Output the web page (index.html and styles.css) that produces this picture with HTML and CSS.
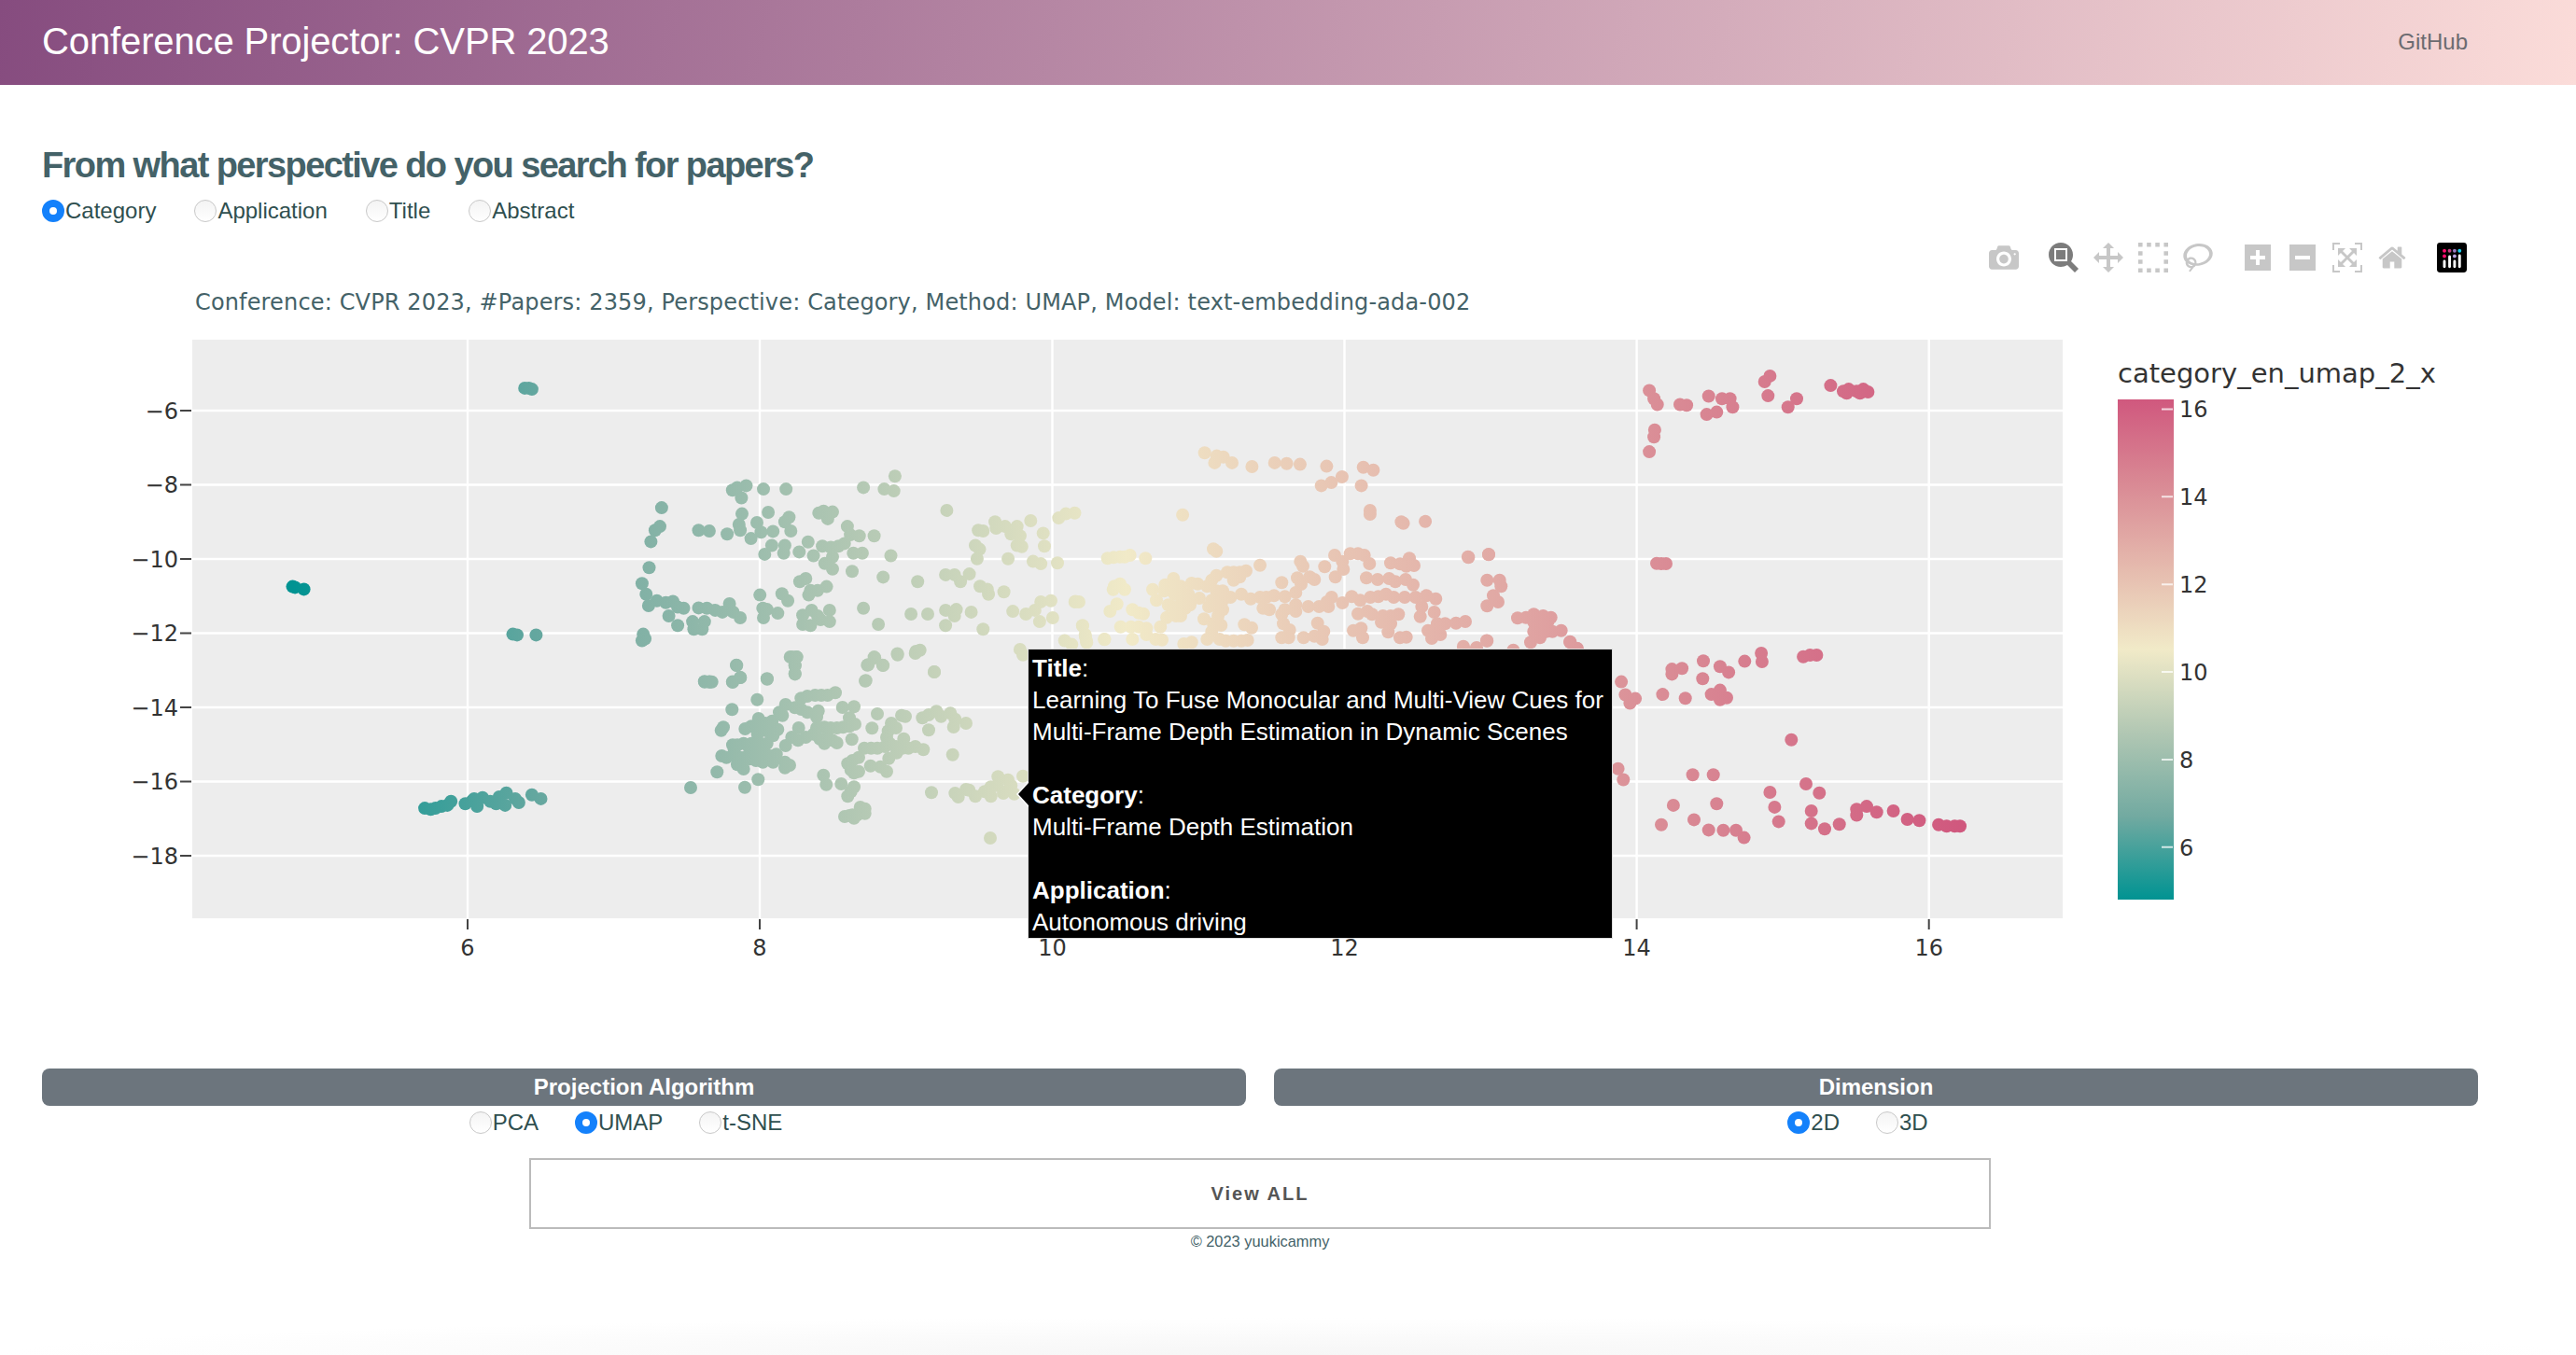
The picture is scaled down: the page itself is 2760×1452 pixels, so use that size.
FILE: index.html
```html
<!DOCTYPE html>
<html lang="en">
<head>
<meta charset="utf-8">
<title>Conference Projector: CVPR 2023</title>
<link rel="stylesheet" href="styles.css">
</head>
<body>
<header class="navbar">
  <span class="brand">Conference Projector: CVPR 2023</span>
  <a class="nav-link">GitHub</a>
</header>
<main class="container">
  <h2 class="question">From what perspective do you search for papers?</h2>
  <div class="radios">
    <label class="radio"><input type="radio" name="perspective" checked>Category</label>
    <label class="radio"><input type="radio" name="perspective">Application</label>
    <label class="radio"><input type="radio" name="perspective">Title</label>
    <label class="radio"><input type="radio" name="perspective">Abstract</label>
  </div>

  <section class="plot">
    <svg class="chart" viewBox="45 250 2610 840" width="2610" height="840">
      <defs>
        <linearGradient id="tealrose" gradientUnits="userSpaceOnUse" x1="313.6" y1="0" x2="2100" y2="0">
          <stop offset="0" stop-color="#009392"/><stop offset="0.1667" stop-color="#72aaa1"/><stop offset="0.3333" stop-color="#b1c7b3"/><stop offset="0.5" stop-color="#f1eac8"/><stop offset="0.6667" stop-color="#e5b9ad"/><stop offset="0.8333" stop-color="#d98994"/><stop offset="1" stop-color="#d0587e"/>
        </linearGradient>
        <linearGradient id="tealrose-bar" x1="0" y1="1" x2="0" y2="0">
          <stop offset="0" stop-color="#009392"/><stop offset="0.1667" stop-color="#72aaa1"/><stop offset="0.3333" stop-color="#b1c7b3"/><stop offset="0.5" stop-color="#f1eac8"/><stop offset="0.6667" stop-color="#e5b9ad"/><stop offset="0.8333" stop-color="#d98994"/><stop offset="1" stop-color="#d0587e"/>
        </linearGradient>
      </defs>
      <text class="chart-title" x="209" y="332">Conference: CVPR 2023, #Papers: 2359, Perspective: Category, Method: UMAP, Model: text-embedding-ada-002</text>
      <rect class="plot-bg" x="206" y="364" width="2004" height="620"/>
      <g class="grid">
        <path d="M501 364V984M814 364V984M1127.5 364V984M1440.5 364V984M1753.6 364V984M2066.7 364V984"/>
        <path d="M206 440H2210M206 519.5H2210M206 599H2210M206 678.5H2210M206 758H2210M206 837.5H2210M206 917H2210"/>
      </g>
      <g id="points" fill="url(#tealrose)"></g>
      <g class="ticks">
        <path d="M193 440H205M193 519.5H205M193 599H205M193 678.5H205M193 758H205M193 837.5H205M193 917H205"/>
        <path d="M501 985V996M814 985V996M1127.5 985V996M1440.5 985V996M1753.6 985V996M2066.7 985V996"/>
      </g>
      <g class="tick-labels y">
        <text x="191" y="449">−6</text><text x="191" y="528">−8</text><text x="191" y="608">−10</text><text x="191" y="687">−12</text><text x="191" y="767">−14</text><text x="191" y="846">−16</text><text x="191" y="926">−18</text>
      </g>
      <g class="tick-labels x">
        <text x="501" y="1024">6</text><text x="814" y="1024">8</text><text x="1127.5" y="1024">10</text><text x="1440.5" y="1024">12</text><text x="1753.6" y="1024">14</text><text x="2066.7" y="1024">16</text>
      </g>
      <text class="legend-title" x="2269" y="410">category_en_umap_2_x</text>
      <rect x="2269" y="428" width="60" height="536" fill="url(#tealrose-bar)"/>
      <path class="bar-ticks" d="M2316 438.4H2328M2316 532.3H2328M2316 626.2H2328M2316 720H2328M2316 814H2328M2316 907.8H2328"/>
      <g class="tick-labels bar">
        <text x="2335" y="447">16</text><text x="2335" y="541">14</text><text x="2335" y="635">12</text><text x="2335" y="729">10</text><text x="2335" y="823">8</text><text x="2335" y="917">6</text>
      </g>
    </svg>

    <div class="modebar">
      <div class="modebar-group">
        <span class="mode-btn"><svg viewBox="0 0 1000 1000"><path transform="matrix(1 0 0 -1 0 850)" d="m500 450c-83 0-150-67-150-150 0-83 67-150 150-150 83 0 150 67 150 150 0 83-67 150-150 150z m400 150h-120c-16 0-34 13-39 29l-31 93c-6 15-23 28-40 28h-340c-16 0-34-13-39-28l-31-94c-6-15-23-28-40-28h-120c-55 0-100-45-100-100v-450c0-55 45-100 100-100h800c55 0 100 45 100 100v450c0 55-45 100-100 100z m-400-550c-138 0-250 112-250 250 0 138 112 250 250 250 138 0 250-112 250-250 0-138-112-250-250-250z m365 380c-19 0-35 16-35 35 0 19 16 35 35 35 19 0 35-16 35-35 0-19-16-35-35-35z"/></svg></span>
      </div>
      <div class="modebar-group">
        <span class="mode-btn active"><svg viewBox="0 0 1000 1000"><path transform="matrix(1 0 0 -1 0 850)" d="m1000-25l-250 251c40 63 63 138 63 218 0 224-182 406-407 406-224 0-406-182-406-406s183-406 407-406c80 0 155 22 218 62l250-250 125 125z m-812 250l0 438 437 0 0-438-437 0z m62 375l313 0 0-312-313 0 0 312z"/></svg></span>
        <span class="mode-btn"><svg viewBox="0 0 1000 1000"><path transform="matrix(1 0 0 -1 0 850)" d="m1000 350l-187 188 0-125-250 0 0 250 125 0-188 187-187-187 125 0 0-250-250 0 0 125-188-188 186-187 0 125 252 0 0-250-125 0 187-188 188 188-125 0 0 250 250 0 0-126 187 188z"/></svg></span>
        <span class="mode-btn"><svg viewBox="0 0 1000 1000"><path transform="matrix(1 0 0 -1 0 850)" d="m0 850l0-143 143 0 0 143-143 0z m286 0l0-143 143 0 0 143-143 0z m285 0l0-143 143 0 0 143-143 0z m286 0l0-143 143 0 0 143-143 0z m-857-286l0-143 143 0 0 143-143 0z m857 0l0-143 143 0 0 143-143 0z m-857-285l0-143 143 0 0 143-143 0z m857 0l0-143 143 0 0 143-143 0z m-857-286l0-143 143 0 0 143-143 0z m286 0l0-143 143 0 0 143-143 0z m285 0l0-143 143 0 0 143-143 0z m286 0l0-143 143 0 0 143-143 0z"/></svg></span>
        <span class="mode-btn"><svg viewBox="0 0 1031 1000"><path transform="matrix(1 0 0 -1 0 850)" d="m1018 538c-36 207-290 336-568 286-277-48-473-256-436-463 10-57 36-108 76-151-13-66 11-137 68-183 34-28 75-41 114-42l-55-70 0 0c-2-1-3-2-4-3-10-14-8-34 5-45 14-11 34-8 45 4 1 1 2 3 2 5l0 0 113 140c16 11 31 24 45 40 4 3 6 7 8 11 48-3 100 0 151 9 278 48 473 255 436 462z m-624-379c-80 14-149 48-197 96 42 42 109 47 156 9 33-26 47-66 41-105z m-187-74c-19 16-33 37-39 60 50-32 109-55 174-68-42-25-95-24-135 8z m360 75c-34-7-69-9-102-8 8 62-16 128-68 170-73 59-175 54-244-5-9 20-16 40-20 61-28 159 121 317 333 354s407-60 434-217c28-159-121-318-333-355z"/></svg></span>
      </div>
      <div class="modebar-group">
        <span class="mode-btn"><svg viewBox="0 0 875 1000"><path transform="matrix(1 0 0 -1 0 850)" d="m1 787l0-875 875 0 0 875-875 0z m687-500l-187 0 0-187-125 0 0 187-188 0 0 125 188 0 0 187 125 0 0-187 187 0 0-125z"/></svg></span>
        <span class="mode-btn"><svg viewBox="0 0 875 1000"><path transform="matrix(1 0 0 -1 0 850)" d="m0 788l0-876 875 0 0 876-875 0z m688-500l-500 0 0 125 500 0 0-125z"/></svg></span>
        <span class="mode-btn"><svg viewBox="0 0 1000 1000"><path transform="matrix(1 0 0 -1 0 850)" d="m250 850l-187 0-63 0 0-62 0-188 63 0 0 188 187 0 0 62z m688 0l-188 0 0-62 188 0 0-188 62 0 0 188 0 62-62 0z m-875-938l0 188-63 0 0-188 0-62 63 0 187 0 0 62-187 0z m875 188l0-188-188 0 0-62 188 0 62 0 0 62 0 188-62 0z m-125 188l-1 0-93-94-156 156 156 156 92-93 2 0 0 250-250 0 0-2 93-92-156-156-156 156 94 92 0 2-250 0 0-250 0 0 93 93 157-156-157-156-93 94 0 0 0-250 250 0 0 0-94 93 156 157 156-157-93-93 0 0 250 0 0 250z"/></svg></span>
        <span class="mode-btn"><svg viewBox="0 0 928.6 1000"><path transform="matrix(1 0 0 -1 0 850)" d="m786 296v-267q0-15-11-26t-25-10h-214v214h-143v-214h-214q-15 0-25 10t-11 26v267q0 1 0 2t0 2l321 264 321-264q1-1 1-4z m124 39l-34-41q-5-5-12-6h-2q-7 0-12 3l-386 322-386-322q-7-4-13-4-7 2-12 7l-35 41q-4 5-3 13t6 12l401 334q18 15 42 15t43-15l136-114v109q0 8 5 13t13 5h107q8 0 13-5t5-13v-227l122-102q5-5 6-12t-4-13z"/></svg></span>
      </div>
      <div class="modebar-group">
        <span class="mode-btn logo"><svg viewBox="0 0 132 132">
          <rect width="132" height="132" rx="14" fill="#000"/>
          <g fill="#ff0d6e"><circle cx="33" cy="36" r="8"/><circle cx="33" cy="60" r="8"/></g>
          <circle cx="56" cy="36" r="8" fill="#c2407f"/><circle cx="78" cy="36" r="8" fill="#9a7dc2"/><circle cx="100" cy="36" r="8" fill="#19d3f3"/>
          <circle cx="78" cy="60" r="8" fill="#b9a4e0"/>
          <g fill="#fff"><rect x="27" y="76" width="12" height="36" rx="6"/><rect x="50" y="56" width="12" height="56" rx="6"/><rect x="72" y="76" width="12" height="36" rx="6"/><rect x="94" y="52" width="12" height="60" rx="6"/></g>
        </svg></span>
      </div>
    </div>

    <div class="hover-label">
      <b>Title</b>:<br>
      Learning To Fuse Monocular and Multi-View Cues for<br>
      Multi-Frame Depth Estimation in Dynamic Scenes<br>
      <br>
      <b>Category</b>:<br>
      Multi-Frame Depth Estimation<br>
      <br>
      <b>Application</b>:<br>
      Autonomous driving
    </div>
  </section>

  <div class="controls">
    <div class="control">
      <div class="badge">Projection Algorithm</div>
      <div class="radios centered">
        <label class="radio"><input type="radio" name="algo">PCA</label>
        <label class="radio"><input type="radio" name="algo" checked>UMAP</label>
        <label class="radio"><input type="radio" name="algo">t-SNE</label>
      </div>
    </div>
    <div class="control">
      <div class="badge">Dimension</div>
      <div class="radios centered">
        <label class="radio"><input type="radio" name="dim" checked>2D</label>
        <label class="radio"><input type="radio" name="dim">3D</label>
      </div>
    </div>
  </div>

  <button class="view-all" type="button">View ALL</button>
  <p class="copyright">© 2023 yuukicammy</p>
</main>
<div class="bottom-glow"></div>
<script src="script.js"></script>
</body>
</html>
```
FILE: styles.css
```css
* { box-sizing: border-box; }
html, body { margin: 0; height: 100%; overflow: hidden; }
body {
  background: #fff;
  font-family: "Liberation Sans", Arial, sans-serif;
  color: #446268;
  display: flex;
  flex-direction: column;
  min-height: 1452px;
}
.navbar {
  height: 91px;
  flex: none;
  display: flex;
  align-items: center;
  justify-content: space-between;
  padding: 0 116px 0 45px;
  background: linear-gradient(100deg, #864c7f 0%, #fbdcd9 100%);
}
.brand { font-size: 40px; letter-spacing: -0.12px; color: #fff; line-height: 1; padding-bottom: 4px; }
.nav-link { font-size: 24px; color: #6b6b70; padding-bottom: 2px; }
.container { width: 2610px; margin-left: 45px; flex: none; }
.question {
  margin: 62px 0 0;
  font-size: 38px;
  line-height: 48px;
  font-weight: 700;
  letter-spacing: -1.6px;
  color: #446268;
}
.radios { display: flex; height: 26px; margin-top: 12px; }
.radios.centered { justify-content: center; margin-top: 5px; }
.radio {
  display: flex;
  align-items: center;
  font-size: 24px;
  line-height: 26px;
  color: #2f4f4f;
  margin-right: 41px;
}
.centered .radio { margin-right: 39px; }
.radio input {
  appearance: none;
  -webkit-appearance: none;
  flex: none;
  width: 24px;
  height: 24px;
  margin: 0 1px 0 0;
  border-radius: 50%;
  border: 1px solid #c8c8c8;
  background: linear-gradient(#f4f4f4, #fff);
}
.radio input:checked { border: 8px solid #1481fb; background: #fff; }
.plot { position: relative; width: 2610px; height: 840px; margin-top: 11px; }
.chart { display: block; }
.chart-title { font: 24px "DejaVu Sans", Verdana, sans-serif; letter-spacing: .15px; fill: #446268; }
.plot-bg { fill: #ededed; }
.grid path { stroke: #fff; stroke-width: 2.4; fill: none; }
.ticks path { stroke: #444; stroke-width: 2; fill: none; }
.tick-labels text { font: 24px "DejaVu Sans", Verdana, sans-serif; fill: #333; }
.tick-labels.y text { text-anchor: end; }
.tick-labels.x text { text-anchor: middle; }
.legend-title { font: 29px "DejaVu Sans", Verdana, sans-serif; fill: #333; }
.bar-ticks { stroke: #fff; stroke-opacity: .75; stroke-width: 2; fill: none; }
.modebar { position: absolute; top: 10px; right: 4px; display: flex; gap: 16px; }
.modebar-group { display: flex; }
.mode-btn { width: 48px; height: 32px; display: flex; justify-content: center; }
.mode-btn svg { height: 32px; width: 32px; fill: rgba(68, 68, 68, .3); }
.mode-btn.active svg { fill: rgba(68, 68, 68, .7); }
.hover-label {
  position: absolute;
  left: 1056px;
  top: 445px;
  width: 627px;
  height: 311px;
  padding: 3px 4px;
  background: #000;
  border: 1px solid #ddd;
  color: #fff;
  font-size: 26px;
  line-height: 34px;
  white-space: nowrap;
}
.hover-label::before,
.hover-label::after {
  content: "";
  position: absolute;
  top: 50%;
  width: 0;
  height: 0;
  border-style: solid;
  border-color: transparent;
  border-left-width: 0;
}
.hover-label::before { left: -13px; margin-top: -14px; border-width: 14px 13px 14px 0; border-right-color: #fff; }
.hover-label::after { left: -11px; margin-top: -12px; border-width: 12px 11px 12px 0; border-right-color: #000; }
.controls { display: flex; gap: 30px; margin-top: 55px; }
.control { flex: 1; }
.badge {
  height: 40px;
  border-radius: 8px;
  background: #6c757d;
  color: #fff;
  font-size: 24px;
  line-height: 40px;
  font-weight: 700;
  text-align: center;
}
.view-all {
  display: block;
  width: 1566px;
  height: 76px;
  margin: 25px auto 0;
  background: #fff;
  border: 2px solid #bbb;
  font: 700 20px "Liberation Sans", Arial, sans-serif;
  letter-spacing: 2px;
  color: #555;
  padding: 0;
}
.copyright { margin: 3px 0 0; font-size: 16.4px; line-height: 20px; text-align: center; color: #446268; }
.bottom-glow {
  margin-top: auto;
  height: 40px;
  flex: none;
  background: radial-gradient(ellipse 50% 100% at 50% 100%, #f6f6f6, #fff);
}
```
FILE: script.js
```js
// Scatter data, read off per-region in pixel frames: [originX, originY, scaleX, scaleY, [x, y, x, y, ...]]
var frames = [
  [200, 360, 1.568, 2.45, [
    568,137,575,137,580,140,178,658,182,660,197,665,548,783,555,785,587,785,
    400,1240,410,1243,418,1240,428,1235,438,1232,444,1222,468,1228,480,1220,488,1235,483,1215,497,1212,510,1222,520,1228,525,1210,537,1200,535,1232,552,1215,558,1225,580,1205,595,1215,
    798,451,787,510,795,500,780,540,777,608,765,650,772,678,776,708,790,695,805,700,817,697,825,712,835,715,810,735,825,760,850,750,852,770,866,770,870,750,860,714,874,715,888,720,900,725,912,703,918,725,930,740,767,783,765,800,770,795,
    917,405,925,398,940,393,932,425,969,402,1007,402,933,467,977,463,958,490,928,495,930,510,908,520,860,510,878,512,1012,476,1005,488,1015,512,965,515,985,513,948,532,983,550,1005,550,1003,570,971,573,1029,567,1053,577,1044,541,1062,465,1070,460,1085,462,1077,480,
    1068,552,1082,555,1095,552,1105,545,1115,522,1110,500,1130,525,1155,525,1120,570,1135,570,1183,577,1085,580,1072,597,1085,612,1118,618,1170,633,1137,398,1172,402,1188,407,1190,368,1277,458,
    1030,645,1040,637,1048,668,1060,668,1075,658,1045,680,963,680,1000,677,1010,695,968,715,975,718,993,728,969,740,1035,733,1050,720,1060,735,1080,720,1035,757,1048,760,1065,745,1080,750,1137,715,1162,757,
    1217,730,1245,730,1275,720,1293,718,1290,735,1275,760,1318,725,1338,770,1275,627,1290,627,1300,645,1315,625,1228,645,1333,657,1345,665,1347,678,1373,672,
    1330,510,1338,512,1325,550,1332,560,1328,585,1358,488,1360,505,1375,500,1395,500,1385,520,1400,525,1395,550,1403,553,1380,585,1418,485,1439,518,1441,552,1422,592,1435,598,1463,596,1465,478,1477,467,1492,465,
    1388,723,1410,730,1425,720,1433,750,1435,698,1452,695,1455,740,1493,697,1400,823,1475,800,1510,790,1487,810,1512,805,1542,797,1505,760,
    1017,843,1025,843,1022,865,1022,888,924,865,930,897,917,908,870,907,878,908,975,900,1145,863,1155,843,1170,865,1194,834,1225,828,1232,825,1256,882,1140,906
  ]],
  [740, 700, 3, 3, [
    147,38,45,92,60,92,68,92,135,93,160,78,246,83,335,15,320,12,340,12,335,40,335,65,568,38,592,15,617,38,563,88,783,60,665,5,722,0,1068,5,133,181,214,149,
    355,145,375,138,400,135,420,135,440,135,465,127,305,165,335,175,355,180,375,190,285,190,295,200,410,185,405,205,488,174,525,172,600,195,105,238,98,248,
    175,243,195,235,218,210,220,240,240,225,262,218,245,250,265,265,280,245,215,260,210,285,195,290,170,290,150,295,135,295,140,310,100,330,115,335,150,340,160,335,175,335,210,320,225,320,240,330,255,330,275,325,265,350,232,350,205,335,170,372,150,358,85,382,303,350,303,368,318,360,
    347,240,305,297,325,270,345,280,370,270,395,260,405,240,415,275,430,290,470,288,440,270,455,280,430,238,450,240,470,240,490,238,510,235,528,228,510,208,518,277,583,241,
    645,225,635,250,660,240,630,270,640,290,685,275,600,305,580,305,558,305,625,300,660,300,680,305,700,305,722,300,748,310,540,335,520,345,505,355,515,375,525,385,540,380,578,362,610,365,630,380,637,338,662,320,
    427,392,436,422,484,420,525,430,515,445,505,460,174,431,217,406,0,432,520,520,495,525,510,522,535,520,560,515,545,495,560,500,525,530,
    678,200,690,203,745,208,765,198,790,187,805,203,835,193,850,212,845,237,885,225,765,247,774,448,850,450,860,462,885,438,895,440,915,460,945,445,965,460,965,430,988,397,985,425,1020,407,1005,450,1020,440,1040,452,1030,425,1068,395,842,326,963,594,
    205,300,225,290,190,310,190,340,225,300,235,305,245,290,210,345
  ]],
  [1140, 560, 3, 3, [
    35,255,48,255,140,115,160,112,180,110,195,110,212,105,262,115,480,85,490,92,162,205,180,197,195,215,158,215,170,262,148,285,285,215,297,250,325,200,352,180,375,205,322,220,
    410,195,430,197,460,205,475,185,490,170,525,160,545,160,565,160,585,155,565,175,545,185,630,137,355,230,375,235,400,230,395,250,435,243,335,265,350,270,375,265,390,275,405,265,
    475,250,465,270,490,270,510,280,510,220,535,240,495,300,505,330,480,325,450,310,330,305,375,300,360,300,310,335,220,280,240,290,255,293,182,335,215,335,240,335,265,340,60,332,68,360,72,380,130,375,220,375,295,375,315,377,265,360,
    570,230,600,245,630,240,650,240,675,235,710,238,745,225,640,275,660,280,700,193,750,178,762,198,790,175,805,183,838,142,870,105,872,175,898,150,760,125,768,140,895,125,920,100,945,100,965,105,982,132,
    1050,130,1080,133,1110,115,1100,140,1125,138,972,178,1008,183,1045,180,1065,190,1098,183,1122,200,925,238,952,250,985,240,1010,238,1035,230,1060,240,1095,240,1130,240,1165,235,1195,245,1150,270,
    785,270,820,270,845,255,860,240,895,258,850,270,745,265,745,285,710,280,700,295,705,325,725,345,700,370,722,370,815,323,835,350,805,365,830,375,770,370,
    945,293,975,285,990,295,1025,300,1050,300,1075,295,1020,320,1050,325,930,347,955,340,960,370,1042,352,1080,370,1100,368,1145,302,1190,288,1200,325,1225,325,1260,323,1290,318,1170,347,1190,345,1210,360,1182,372,
    580,328,603,338,460,375,475,350,500,375,520,380,545,380,570,380,590,378,385,390,410,385,
    490,220,490,245,510,250,500,280,350,205,365,215,380,250,360,285
  ]],
  [1500, 570, 3, 3, [
    220,82,285,72,280,155,320,155,325,175,300,205,315,225,280,238,378,277,405,275,430,265,460,270,485,275,450,295,430,320,470,320,490,320,518,317,420,355,450,340,547,355,570,375,280,350,205,375,245,375,840,102,855,102,
    430,290,460,300,440,335,475,290
  ]],
  [1100, 360, 1.4, 2.45, [
    267,307,285,315,295,318,282,333,308,333,338,343,372,333,390,335,410,337,450,342,505,345,520,352,473,370,457,385,442,393,502,393,234,470,515,458,515,468,562,488,565,492,598,487,662,580,693,574,
    934,143,941,165,946,180,980,180,990,182,1023,158,1043,165,1055,165,1059,187,1035,200,1020,206,1115,105,1107,120,1112,157,1155,165,1142,187,1206,130,1225,145,1233,140,1245,145,1255,140,1262,147,1230,150,1250,150,942,247,941,265,934,304,945,597,
    815,803,825,820,690,800,655,815,675,818,730,825,892,908,898,942,905,964,913,952,954,941,988,951,968,875,983,873,968,888,1015,853,1040,868,1053,883,1014,900,1077,854,1102,833,1103,855,1165,842,1175,838,1185,838,1027,941,1040,930,1040,955,1050,950,
    1147,1060,887,1136,895,1165,999,1152,1030,1152,1169,1176,1115,1198,1189,1200,970,1232,1035,1228,1122,1237,1177,1247,1245,1243,1260,1235,1275,1250,1300,1247,1245,1258,952,1283,1001,1270,1023,1297,1045,1298,1064,1298,1076,1317,1128,1275,1177,1280,1197,1294,1219,1282,1321,1269,1339,1272,1368,1283,1380,1287,1392,1287,1400,1287
  ]]
];

var layer = document.getElementById("points");
frames.forEach(function (f) {
  var pts = f[4];
  for (var i = 0; i < pts.length; i += 2) {
    var c = document.createElementNS("http://www.w3.org/2000/svg", "circle");
    c.setAttribute("cx", (f[0] + pts[i] / f[2]).toFixed(1));
    c.setAttribute("cy", (f[1] + pts[i + 1] / f[3]).toFixed(1));
    c.setAttribute("r", "7");
    layer.appendChild(c);
  }
});
```
